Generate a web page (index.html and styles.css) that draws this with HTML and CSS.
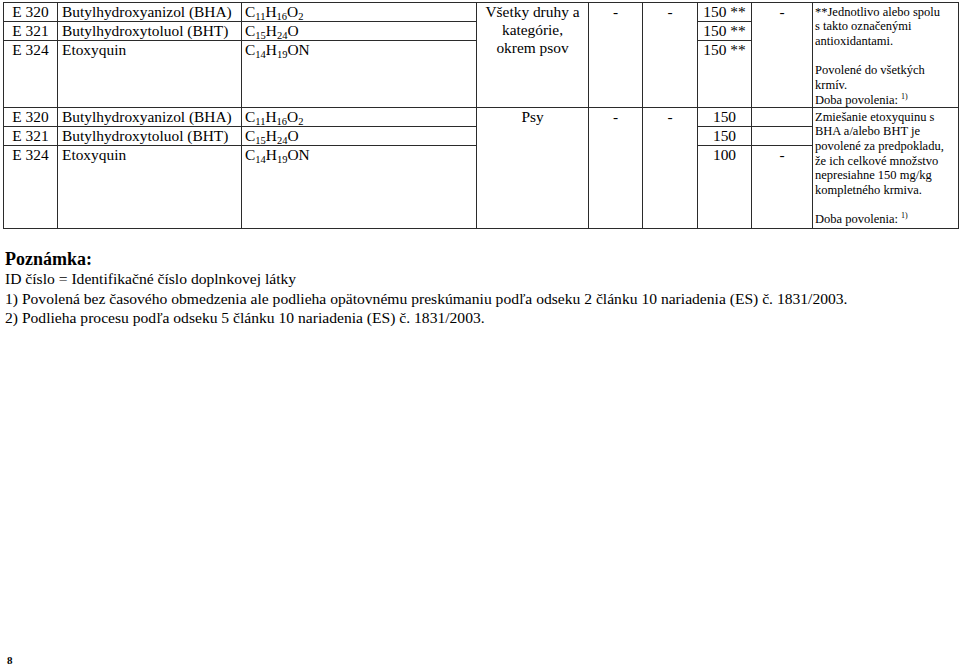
FILE: index.html
```html
<!DOCTYPE html>
<html lang="sk">
<head>
<meta charset="utf-8">
<title>Antioxidanty</title>
<link rel="stylesheet" href="styles.css">
</head>
<body>
<div class="page">
  <div class="grid">
    <div class="code">E 320</div>
    <div class="name">Butylhydroxyanizol (BHA)</div>
    <div class="formula">C<sub>11</sub>H<sub>16</sub>O<sub>2</sub></div>
    <div class="species span3">Všetky druhy a<br>kategórie,<br>okrem psov</div>
    <div class="dash span3">-</div>
    <div class="dash span3">-</div>
    <div class="amt">150 **</div>
    <div class="dash span3">-</div>
    <div class="note span3">**Jednotlivo alebo spolu<br>s takto označenými<br>antioxidantami.<br><br>Povolené do všetkých<br>krmív.<br>Doba povolenia: <sup>1)</sup></div>

    <div class="code">E 321</div>
    <div class="name">Butylhydroxytoluol (BHT)</div>
    <div class="formula">C<sub>15</sub>H<sub>24</sub>O</div>
    <div class="amt">150 **</div>

    <div class="code">E 324</div>
    <div class="name">Etoxyquin</div>
    <div class="formula">C<sub>14</sub>H<sub>19</sub>ON</div>
    <div class="amt">150 **</div>

    <div class="code">E 320</div>
    <div class="name">Butylhydroxyanizol (BHA)</div>
    <div class="formula">C<sub>11</sub>H<sub>16</sub>O<sub>2</sub></div>
    <div class="species span3">Psy</div>
    <div class="dash span3">-</div>
    <div class="dash span3">-</div>
    <div class="amt">150</div>
    <div class="dash"></div>
    <div class="note span3">Zmiešanie etoxyquinu s<br>BHA a/alebo BHT je<br>povolené za predpokladu,<br>že ich celkové množstvo<br>nepresiahne 150 mg/kg<br>kompletného krmiva.<br><br>Doba povolenia: <sup>1)</sup></div>

    <div class="code">E 321</div>
    <div class="name">Butylhydroxytoluol (BHT)</div>
    <div class="formula">C<sub>15</sub>H<sub>24</sub>O</div>
    <div class="amt">150</div>
    <div class="dash"></div>

    <div class="code">E 324</div>
    <div class="name">Etoxyquin</div>
    <div class="formula">C<sub>14</sub>H<sub>19</sub>ON</div>
    <div class="amt">100</div>
    <div class="dash">-</div>
  </div>

  <div class="notes">
    <div class="notes-title">Poznámka:</div>
    <div>ID číslo = Identifikačné číslo doplnkovej látky</div>
    <div>1) Povolená bez časového obmedzenia ale podlieha opätovnému preskúmaniu podľa odseku 2 článku 10 nariadenia (ES) č. 1831/2003.</div>
    <div>2) Podlieha procesu podľa odseku 5 článku 10 nariadenia (ES) č. 1831/2003.</div>
  </div>

  <div class="pageno">8</div>
</div>
</body>
</html>
```

FILE: styles.css
```css
body {
  margin: 0;
  background: #fff;
  color: #000;
  font-family: "Liberation Serif", "Times New Roman", serif;
}

.page {
  height: 666px;
  box-sizing: border-box;
  padding: 2px 0 0 3px;
  display: flex;
  flex-direction: column;
  overflow: hidden;
}

.grid {
  display: grid;
  width: 956px;
  box-sizing: border-box;
  grid-template-columns: 53px 183px 234px 111px 53px 54px 53px 60px 145px;
  grid-template-rows: 18px 18px 66px 18px 18px 82px;
  gap: 1px;
  background: #2b2b2b;
  border: 1px solid #2b2b2b;
}

.grid > div {
  background: #fff;
  font-size: 15.4px;
  line-height: 18px;
  white-space: nowrap;
  overflow: hidden;
}

.span3 {
  grid-row: span 3;
}

.code {
  text-align: center;
}

.name {
  padding-left: 4px;
}

.formula {
  padding-left: 3px;
}

sub {
  font-size: 10.5px;
  line-height: 0;
  vertical-align: -3px;
}

.species {
  text-align: center;
}

.dash,
.amt {
  text-align: center;
}

.grid > .note {
  font-size: 12.5px;
  line-height: 14.7px;
  padding: 1.5px 0 0 2px;
}

sup {
  font-size: 8px;
  line-height: 0;
  vertical-align: 5px;
}

.notes {
  margin-top: 20px;
  padding-left: 2px;
  font-size: 15.6px;
  line-height: 19.5px;
}

.notes-title {
  font-size: 18px;
  font-weight: bold;
  line-height: 20px;
}

.pageno {
  margin-top: auto;
  margin-bottom: 1px;
  padding-left: 4px;
  font-size: 11px;
  font-weight: bold;
  line-height: 10px;
}
```
